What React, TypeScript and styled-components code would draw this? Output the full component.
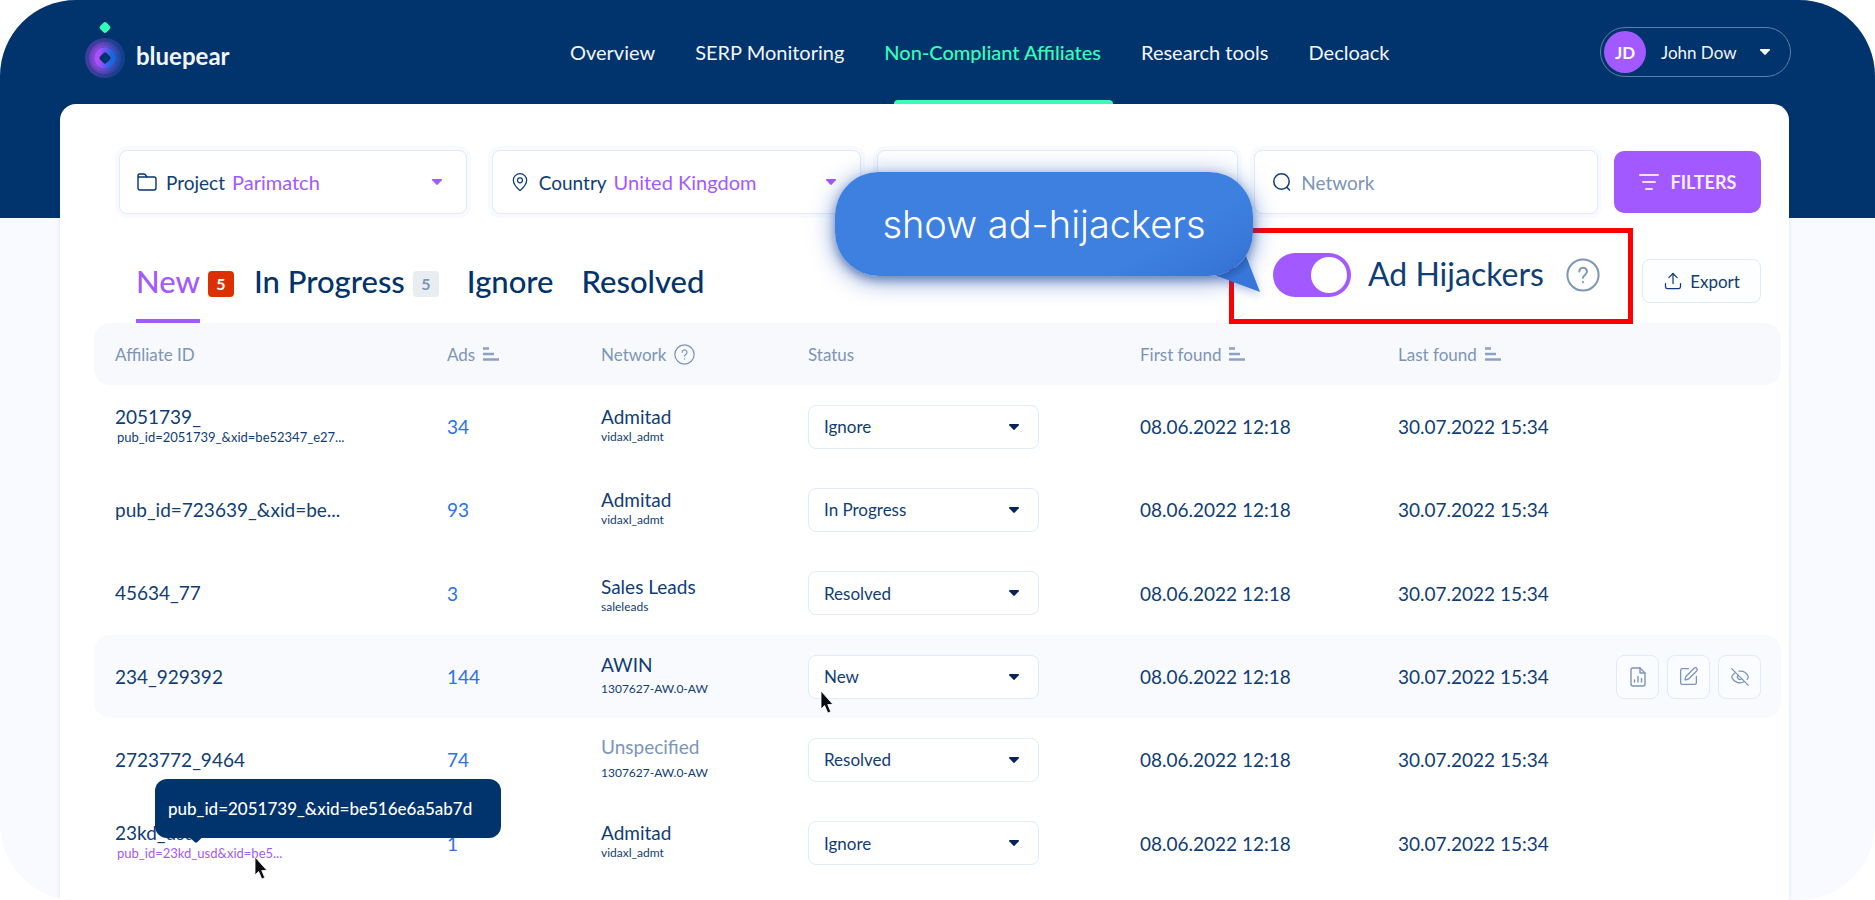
import React from "react";
import styled, { createGlobalStyle } from "styled-components";
import { EyeOff, MapPin, SquarePen, Upload } from "lucide-react";

const color = {
  navy: "#01336c",
  ink: "#0f3d75",
  muted: "#7b95b8",
  line: "#dfeafb",
  page: "#f8faff",
  purple: "#a259ff",
  green: "#35ffb8",
  link: "#2a72e8",
  callout: "#3d80df",
};

const GlobalStyle = createGlobalStyle`
  *, *::before, *::after { box-sizing: border-box; }
  body {
    margin: 0;
    background: #fff;
    color: ${color.ink};
    font-family: Lato, "Open Sans", sans-serif;
    font-size: 19px;
  }
  button, input, select { font: inherit; color: inherit; }
  button { cursor: pointer; }
  a { text-decoration: none; }
`;

const Shell = styled.div`
  display: flex;
  flex-direction: column;
  min-height: 100vh;
  overflow: hidden;
  border-radius: 76px;
  background: linear-gradient(${color.navy} 218px, ${color.page} 218px);
`;

/* Header */

const Header = styled.header`
  display: grid;
  grid-template-columns: 486px 1fr auto;
  align-items: center;
  height: 104px;
  padding: 0 84px;
  color: #f2f6fc;
`;

const Brand = styled.a`
  display: flex;
  align-items: flex-end;
  gap: 10px;
  margin-bottom: 4px;
  color: #f2f6fc;
  font-size: 24px;
  font-weight: 700;
  line-height: 46px;
`;

const Nav = styled.nav`
  display: flex;
  align-self: stretch;
  gap: 40px;
`;

const NavLink = styled.a<{ $active?: boolean }>`
  position: relative;
  display: flex;
  align-items: center;
  color: ${(p) => (p.$active ? color.green : "inherit")};
  font-size: 20px;
  font-weight: ${(p) => (p.$active ? 500 : 400)};
  white-space: nowrap;

  &::after {
    content: "";
    display: ${(p) => (p.$active ? "block" : "none")};
    position: absolute;
    left: 10px;
    right: -12px;
    bottom: 0;
    height: 4px;
    border-radius: 4px 4px 0 0;
    background: ${color.green};
  }
`;

const UserButton = styled.button`
  display: flex;
  align-items: center;
  width: 191px;
  height: 50px;
  padding: 0 19px 0 3px;
  border: 1px solid #5d80a8;
  border-radius: 25px;
  background: none;
  font-size: 17px;
`;

const Avatar = styled.span`
  display: grid;
  place-items: center;
  width: 42px;
  height: 42px;
  margin-right: 15px;
  border-radius: 50%;
  background: ${color.purple};
  color: #fff;
  font-weight: 700;
`;

const UserName = styled.span`
  flex: 1;
  text-align: left;
`;

/* Card and filters */

const Card = styled.main`
  flex: 1;
  margin: 0 86px 0 60px;
  padding-top: 46px;
  border-radius: 16px 16px 0 0;
  background: #fff;
  box-shadow: 0 0 4px rgba(1, 51, 108, 0.12);
`;

const Filters = styled.form`
  display: grid;
  grid-template-columns: 357fr 370fr 361fr 344fr 147px;
  gap: 16px;
  margin: 0 28px 0 59px;
`;

const Field = styled.label<{ $inset?: boolean }>`
  display: flex;
  align-items: center;
  gap: 9px;
  min-width: 0;
  height: 64px;
  margin-right: ${(p) => (p.$inset ? "9px" : "0")};
  padding: 0 23px 0 17px;
  border: 1px solid ${color.line};
  border-radius: 8px;
  background: #fff;
  box-shadow: 0 0 0 4px ${color.page};

  svg { flex: none; }
`;

const FieldSelect = styled.select`
  flex: 1;
  min-width: 0;
  margin-left: -2px;
  padding: 0;
  border: 0;
  appearance: none;
  background: none;
  color: ${color.purple};
  font-size: 20px;
`;

const FieldInput = styled.input`
  flex: 1;
  min-width: 0;
  padding: 0;
  border: 0;
  outline: 0;
  background: none;

  &::placeholder { color: ${color.muted}; opacity: 1; }
`;

const FiltersButton = styled.button`
  display: flex;
  align-items: center;
  justify-content: center;
  gap: 12px;
  height: 62px;
  margin-top: 1px;
  border: 0;
  border-radius: 10px;
  background: ${color.purple};
  color: #f6eeff;
  font-size: 18px;
  font-weight: 700;
`;

/* Tabs */

const TabsRow = styled.div`
  display: flex;
  align-items: flex-end;
  height: 109px;
  padding: 0 28px 0 76px;
`;

const Tabs = styled.div`
  display: flex;
  flex: 1;
  gap: 20px;
`;

const Tab = styled.button<{ $active?: boolean; $plain?: boolean }>`
  display: flex;
  align-items: flex-start;
  gap: 8px;
  padding: 0 0 0 ${(p) => (p.$plain ? "8px" : "0")};
  border: 0;
  background: none;
  color: ${(p) => (p.$active ? color.purple : color.navy)};
  font-size: 31px;
  font-weight: 500;
  line-height: 40px;
  white-space: nowrap;
`;

const TabName = styled.span<{ $active?: boolean }>`
  padding-bottom: 18px;
  border-bottom: 4px solid ${(p) => (p.$active ? color.purple : "transparent")};
`;

const Badge = styled.span<{ $alert?: boolean }>`
  width: 26px;
  margin-top: 10px;
  border-radius: 4px;
  background: ${(p) => (p.$alert ? "#dd3000" : "#e8edf2")};
  color: ${(p) => (p.$alert ? "#fff" : color.muted)};
  font-size: 16px;
  font-weight: 700;
  line-height: 26px;
  text-align: center;
`;

const Highlight = styled.div`
  position: relative;
  z-index: 1;
  display: flex;
  align-items: center;
  width: 404px;
  height: 96px;
  margin: 0 9px -1px 0;
  padding: 0 0 2px 39px;
  border: 5px solid #f00;
`;

const SwitchLabel = styled.label`
  display: flex;
  align-items: center;
  gap: 17px;
  margin-right: 22px;
  font-size: 32px;
  line-height: 40px;
  white-space: nowrap;
`;

const SwitchText = styled.span`
  padding-bottom: 2px;
`;

const Switch = styled.input`
  appearance: none;
  display: flex;
  align-items: center;
  justify-content: flex-end;
  width: 78px;
  height: 44px;
  margin: 0;
  padding: 4px;
  border-radius: 22px;
  background: ${color.purple};

  &::before {
    content: "";
    width: 36px;
    height: 36px;
    border-radius: 50%;
    background: #fff;
  }

  &:not(:checked) { justify-content: flex-start; background: ${color.muted}; }
`;

const Callout = styled.div`
  position: absolute;
  top: -61px;
  right: 375px;
  width: 418px;
  border-radius: 44px;
  background: linear-gradient(150deg, ${color.callout} 75%, #3572d4);
  box-shadow: 0 4px 24px rgba(30, 80, 180, 0.6), 0 4px 8px rgba(20, 50, 110, 0.4);
  color: #fff;
  font-family: Inter, "Open Sans", sans-serif;
  font-size: 38px;
  font-weight: 300;
  line-height: 104px;
  text-align: center;
  white-space: nowrap;
`;

const CalloutTail = styled.svg`
  position: absolute;
  right: -7px;
  bottom: -16px;
  filter: drop-shadow(0 3px 5px rgba(30, 80, 180, 0.35));
`;

const ExportButton = styled.button`
  display: flex;
  align-items: center;
  justify-content: center;
  gap: 7px;
  width: 119px;
  height: 44px;
  margin-bottom: 20px;
  border: 1px solid ${color.line};
  border-radius: 8px;
  background: #fdfeff;
  font-size: 17px;
`;

/* Table */

const TableArea = styled.div`
  padding: 0 8px 0 34px;
`;

const Table = styled.table`
  width: 100%;
  table-layout: fixed;
  border-spacing: 0;
`;

const HeadCell = styled.th<{ $width: number }>`
  width: ${(p) => p.$width}px;
  height: 62px;
  padding: 0;
  background: #f8f9fc;
  color: ${color.muted};
  font-size: 17px;
  font-weight: 400;
  text-align: left;
  white-space: nowrap;

  &:first-child { padding-left: 21px; border-radius: 16px 0 0 16px; }
  &:last-child { border-radius: 0 16px 16px 0; }
`;

const HeadLabel = styled.span`
  display: flex;
  align-items: center;
  gap: 8px;
`;

const Row = styled.tr<{ $active?: boolean }>`
  background: ${(p) => (p.$active ? "#f9fafd" : "transparent")};

  &:nth-child(3n) > td { height: 84px; }
`;

const Cell = styled.td`
  height: 83px;
  padding: 0;
  white-space: nowrap;

  &:first-child { padding-left: 21px; border-radius: 16px 0 0 16px; }
  &:last-child { padding-right: 20px; border-radius: 0 16px 16px 0; }
`;

const Stack = styled.div<{ $gap?: number; $low?: boolean }>`
  position: relative;
  display: flex;
  flex-direction: column;
  gap: ${(p) => p.$gap ?? 0}px;
  padding-top: ${(p) => (p.$low ? 8 : 0)}px;
  line-height: 20px;
`;

const Name = styled.span<{ $muted?: boolean }>`
  color: ${(p) => (p.$muted ? color.muted : "inherit")};
`;

const Detail = styled.span<{ $indent?: boolean; $hot?: boolean }>`
  padding-left: ${(p) => (p.$indent ? 2 : 0)}px;
  color: ${(p) => (p.$hot ? color.purple : "inherit")};
  font-size: ${(p) => (p.$indent ? 13 : 12)}px;
`;

const AdsLink = styled.a`
  color: ${color.link};
`;

const StatusBox = styled.div`
  position: relative;
  display: grid;
  align-items: center;
  width: 231px;

  > select, > svg:first-of-type { grid-area: 1 / 1; }
  > svg:first-of-type { justify-self: end; margin-right: 19px; pointer-events: none; }
`;

const StatusSelect = styled.select`
  width: 100%;
  height: 44px;
  padding: 0 15px;
  border: 1px solid ${color.line};
  border-radius: 8px;
  appearance: none;
  background: #fff;
  font-size: 17px;
`;

const Actions = styled.div`
  display: flex;
  justify-content: flex-end;
  gap: 8px;
`;

const ActionButton = styled.button`
  display: grid;
  place-items: center;
  width: 43px;
  height: 44px;
  padding: 0;
  border: 1px solid ${color.line};
  border-radius: 8px;
  background: #fbfcff;
  color: ${color.muted};
`;

const Tooltip = styled.div`
  position: absolute;
  z-index: 2;
  top: -44px;
  left: 40px;
  width: 346px;
  padding-left: 13px;
  border-radius: 12px;
  background: ${color.navy};
  color: #fff;
  font-size: 17px;
  font-weight: 500;
  line-height: 59px;

  &::after {
    content: "";
    position: absolute;
    left: 35px;
    bottom: -3px;
    width: 12px;
    height: 12px;
    border-radius: 2px;
    background: ${color.navy};
    rotate: 45deg;
  }
`;

const CursorIcon = styled.svg<{ $x: number; $y: number }>`
  position: absolute;
  z-index: 3;
  left: ${(p) => p.$x}px;
  top: ${(p) => p.$y}px;
`;

/* Drawings */

const Logo = () => (
  <svg width="42" height="58" viewBox="0 0 42 58" aria-hidden="true">
    <defs>
      <linearGradient id="pear" x1="0" y1="0" x2="1" y2="0.1">
        <stop offset="0.25" stopColor="#b04dff" />
        <stop offset="0.85" stopColor="#1668e0" />
      </linearGradient>
      <linearGradient id="halo" x1="0" y1="0" x2="1" y2="0.1">
        <stop offset="0.3" stopColor="#9a4be6" />
        <stop offset="1" stopColor="#2a52b8" />
      </linearGradient>
    </defs>
    <rect x="16.5" y="2" width="9" height="9" rx="2.5" transform="rotate(45 21 6.5)" fill={color.green} />
    <g fill="url(#halo)">
      <circle cx="21" cy="37" r="20" opacity="0.4" />
      <circle cx="21" cy="37" r="16" opacity="0.45" />
      <circle cx="21" cy="37" r="13.5" opacity="0.5" />
    </g>
    <circle cx="21" cy="37" r="10.5" fill="url(#pear)" />
    <rect x="16.5" y="32.5" width="9" height="9" rx="2" transform="rotate(45 21 37)" fill={color.navy} />
  </svg>
);

const Caret = ({ fill }: { fill: string }) => (
  <svg width="12" height="8" viewBox="0 0 12 8" aria-hidden="true">
    <path d="M1.8 1h8.4c.7 0 1 .7.6 1.2L6.8 6.6a1.1 1.1 0 0 1-1.6 0L1.2 2.2C.8 1.7 1.1 1 1.8 1z" fill={fill} />
  </svg>
);

const FolderIcon = () => (
  <svg width="20" height="20" viewBox="0 0 20 20" fill="none" stroke={color.navy} strokeWidth="1.4" strokeLinejoin="round" aria-hidden="true">
    <path d="M1 16V3.5A1.5 1.5 0 0 1 2.5 2h4.3a2 2 0 0 1 1.5.7L10 5h7a2 2 0 0 1 2 2v9a2 2 0 0 1-2 2H3a2 2 0 0 1-2-2z" />
    <path d="M1 5h9" />
  </svg>
);

const SearchIcon = () => (
  <svg width="20" height="20" viewBox="0 0 20 20" fill="none" stroke={color.ink} strokeWidth="1.5" strokeLinecap="round" aria-hidden="true">
    <circle cx="9.5" cy="9.5" r="7.7" />
    <path d="M14.8 15.2 17.5 18" />
  </svg>
);

const FilterIcon = () => (
  <svg width="20" height="18" viewBox="0 0 20 18" fill="none" stroke="#f0e2ff" strokeWidth="2" strokeLinecap="round" aria-hidden="true">
    <path d="M1 2h18M4 9h12M7 16h6" />
  </svg>
);

const HelpIcon = ({ size }: { size: number }) => (
  <svg width={size} height={size} viewBox="0 0 24 24" fill="none" stroke={color.muted} strokeWidth="1.4" strokeLinecap="round" strokeLinejoin="round" aria-hidden="true">
    <circle cx="12" cy="12" r="11" />
    <path d="M9.4 9.5a2.7 2.7 0 1 1 4.3 2.200c-1.100.8-1.700 1.200-1.700 2.300M12 17v.2" />
  </svg>
);

const SortIcon = () => (
  <svg width="16" height="14" viewBox="0 0 16 14" fill="none" stroke="#8aa3c4" strokeWidth="2.4" aria-hidden="true">
    <path d="M0 1.500h6M0 7h11M0 12.500h16" />
  </svg>
);

const ReportIcon = () => (
  <svg width="18" height="20" viewBox="0 0 18 20" fill="none" stroke="currentColor" strokeWidth="1.4" strokeLinecap="round" strokeLinejoin="round" aria-hidden="true">
    <path d="M11 1H4a2 2 0 0 0-2 2v14a2 2 0 0 0 2 2h10a2 2 0 0 0 2-2V6z" />
    <path d="M11 1v5h5M5.5 15v-2M9 15V9.5M12.5 15v-3.5" />
  </svg>
);

const Cursor = ({ x, y }: { x: number; y: number }) => (
  <CursorIcon $x={x} $y={y} width="14" height="24" viewBox="0 0 14 24" aria-hidden="true">
    <path d="M1 1v18l3.6-3.5L7.8 23l3-1.3-3.1-7.2H13z" fill="#0b0b12" stroke="#fff" strokeWidth="0.8" />
  </CursorIcon>
);

/* Data */

type Affiliate = {
  id: string;
  detail?: string;
  ads: number;
  network: string;
  account: string;
  status: string;
  gap?: number;
  low?: boolean;
  active?: boolean;
  tooltip?: string;
};

const affiliates: Affiliate[] = [
  { id: "2051739_", detail: "pub_id=2051739_&xid=be52347_e27...", ads: 34, network: "Admitad", account: "vidaxl_admt", status: "Ignore" },
  { id: "pub_id=723639_&xid=be...", ads: 93, network: "Admitad", account: "vidaxl_admt", status: "In Progress" },
  { id: "45634_77", ads: 3, network: "Sales Leads", account: "saleleads", status: "Resolved", low: true },
  { id: "234_929392", ads: 144, network: "AWIN", account: "1307627-AW.0-AW", status: "New", gap: 4, active: true },
  { id: "2723772_9464", ads: 74, network: "Unspecified", account: "1307627-AW.0-AW", status: "Resolved", gap: 6 },
  { id: "23kd_usd", detail: "pub_id=23kd_usd&xid=be5...", ads: 1, network: "Admitad", account: "vidaxl_admt", status: "Ignore", tooltip: "pub_id=2051739_&xid=be516e6a5ab7d" },
];

const statuses = ["New", "In Progress", "Ignore", "Resolved"];
const links = ["Overview", "SERP Monitoring", "Non-Compliant Affiliates", "Research tools", "Decloack"];

const AffiliateRow = ({ item }: { item: Affiliate }) => (
  <Row $active={item.active}>
    <Cell>
      <Stack>
        <Name>{item.id}</Name>
        {item.detail && <Detail $indent $hot={!!item.tooltip}>{item.detail}</Detail>}
        {item.tooltip && (
          <>
            <Tooltip role="tooltip">{item.tooltip}</Tooltip>
            <Cursor x={139} y={33} />
          </>
        )}
      </Stack>
    </Cell>
    <Cell><AdsLink href="#ads">{item.ads}</AdsLink></Cell>
    <Cell>
      <Stack $gap={item.gap} $low={item.low}>
        <Name $muted={item.network === "Unspecified"}>{item.network}</Name>
        <Detail>{item.account}</Detail>
      </Stack>
    </Cell>
    <Cell>
      <StatusBox>
        <StatusSelect aria-label={`Status of ${item.id}`} defaultValue={item.status}>
          {statuses.map((s) => <option key={s}>{s}</option>)}
        </StatusSelect>
        <Caret fill="#06245a" />
        {item.active && <Cursor x={12} y={35} />}
      </StatusBox>
    </Cell>
    <Cell>08.06.2022 12:18</Cell>
    <Cell>30.07.2022 15:34</Cell>
    <Cell>
      {item.active && (
        <Actions>
          <ActionButton type="button" aria-label="Report"><ReportIcon /></ActionButton>
          <ActionButton type="button" aria-label="Edit"><SquarePen size={21} strokeWidth={1.5} /></ActionButton>
          <ActionButton type="button" aria-label="Hide"><EyeOff size={20} strokeWidth={1.5} /></ActionButton>
        </Actions>
      )}
    </Cell>
  </Row>
);

export default function App() {
  return (
    <>
      <GlobalStyle />
      <Shell>
        <Header>
          <Brand href="#home"><Logo />bluepear</Brand>
          <Nav>
            {links.map((l) => (
              <NavLink key={l} href="#nav" $active={l.startsWith("Non")}>{l}</NavLink>
            ))}
          </Nav>
          <UserButton type="button">
            <Avatar>JD</Avatar>
            <UserName>John Dow</UserName>
            <Caret fill="#fff" />
          </UserButton>
        </Header>

        <Card>
          <Filters>
            <Field $inset>
              <FolderIcon />
              Project
              <FieldSelect defaultValue="Parimatch"><option>Parimatch</option></FieldSelect>
              <Caret fill={color.purple} />
            </Field>
            <Field>
              <MapPin size={20} strokeWidth={1.5} />
              Country
              <FieldSelect defaultValue="United Kingdom"><option>United Kingdom</option></FieldSelect>
              <Caret fill={color.purple} />
            </Field>
            <Field>
              <FieldInput type="text" aria-label="Affiliate" />
            </Field>
            <Field>
              <SearchIcon />
              <FieldInput type="search" placeholder="Network" aria-label="Network" />
            </Field>
            <FiltersButton type="button"><FilterIcon />FILTERS</FiltersButton>
          </Filters>

          <TabsRow>
            <Tabs role="tablist">
              <Tab type="button" role="tab" aria-selected $active>
                <TabName $active>New</TabName>
                <Badge $alert>5</Badge>
              </Tab>
              <Tab type="button" role="tab">
                <TabName>In Progress</TabName>
                <Badge>5</Badge>
              </Tab>
              <Tab type="button" role="tab" $plain><TabName>Ignore</TabName></Tab>
              <Tab type="button" role="tab" $plain><TabName>Resolved</TabName></Tab>
            </Tabs>
            <Highlight>
              <SwitchLabel>
                <Switch type="checkbox" role="switch" defaultChecked />
                <SwitchText>Ad Hijackers</SwitchText>
              </SwitchLabel>
              <HelpIcon size={34} />
              <Callout>
                show ad-hijackers
                <CalloutTail width="50" height="42" viewBox="0 0 50 42" aria-hidden="true">
                  <defs>
                    <radialGradient id="fold" gradientUnits="userSpaceOnUse" cx="-1" cy="-18" r="60">
                      <stop offset="0.73" stopColor="#2a5fb4" />
                      <stop offset="0.9" stopColor="#3877da" />
                    </radialGradient>
                  </defs>
                  <path d="M6 25.400A44 44 0 0 0 36 6L50 42z" fill="url(#fold)" />
                </CalloutTail>
              </Callout>
            </Highlight>
            <ExportButton type="button"><Upload size={20} strokeWidth={1.5} />Export</ExportButton>
          </TabsRow>

          <TableArea>
            <Table>
              <thead>
                <tr>
                  <HeadCell $width={353}>Affiliate ID</HeadCell>
                  <HeadCell $width={154}><HeadLabel>Ads<SortIcon /></HeadLabel></HeadCell>
                  <HeadCell $width={207}><HeadLabel>Network<HelpIcon size={21} /></HeadLabel></HeadCell>
                  <HeadCell $width={332}>Status</HeadCell>
                  <HeadCell $width={258}><HeadLabel>First found<SortIcon /></HeadLabel></HeadCell>
                  <HeadCell $width={198}><HeadLabel>Last found<SortIcon /></HeadLabel></HeadCell>
                  <HeadCell $width={185} aria-label="Actions" />
                </tr>
              </thead>
              <tbody>
                {affiliates.map((a) => <AffiliateRow key={a.id} item={a} />)}
              </tbody>
            </Table>
          </TableArea>
        </Card>
      </Shell>
    </>
  );
}
